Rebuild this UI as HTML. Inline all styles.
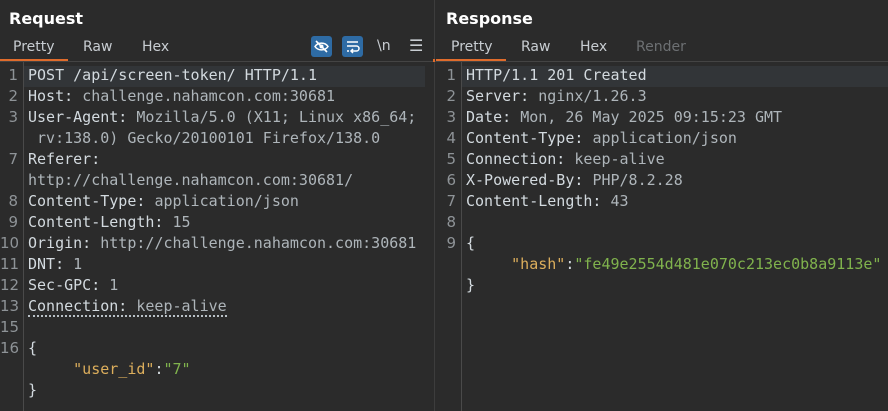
<!DOCTYPE html>
<html><head><style>
body{margin:0;width:888px;height:411px;background:#2b2b2b;overflow:hidden;position:relative;font-family:"Liberation Sans","DejaVu Sans",sans-serif}
.h{position:absolute;top:9px;font-size:16px;font-weight:bold;color:#fff;font-family:"DejaVu Sans",sans-serif}
.tab{position:absolute;top:39px;font-size:14px;color:#c8cdd2;font-family:"DejaVu Sans",sans-serif}
.code{position:absolute;top:65px;font-family:"DejaVu Sans Mono",monospace;font-size:15px;line-height:21px;white-space:pre;color:#d3dadf}
.ln{position:absolute;top:65px;font-family:"DejaVu Sans",sans-serif;font-size:15px;line-height:21px;white-space:pre;color:#8e9397;text-align:right}
.v{color:#aeb5ba}.k{color:#dcae5c}.s{color:#80b34d}
</style></head><body>
<div style="position:absolute;left:434px;top:0;width:1px;height:411px;background:#3d3d3d"></div>
<div class="h" style="left:9px">Request</div>
<div class="h" style="left:446px">Response</div>
<div class="tab" style="left:13px">Pretty</div><div class="tab" style="left:83px">Raw</div><div class="tab" style="left:142px">Hex</div>
<div class="tab" style="left:451px">Pretty</div><div class="tab" style="left:521px">Raw</div><div class="tab" style="left:580px">Hex</div><div class="tab" style="left:636px;color:#6d7073">Render</div>
<div style="position:absolute;left:0;top:61px;width:888px;height:1px;background:#444"></div>
<div style="position:absolute;left:0;top:59px;width:68px;height:2px;background:#e06c2c"></div>
<div style="position:absolute;left:436px;top:59px;width:70px;height:2px;background:#e06c2c"></div>
<div style="position:absolute;left:433px;top:59px;width:2px;height:3px;background:#e06c2c"></div>
<div style="position:absolute;left:311px;top:36px;width:21px;height:21px;border-radius:3px;background:#2e6ba4"></div>
<svg style="position:absolute;left:311px;top:36px" width="21" height="21"><path d="M4 10.5C7 6 14 6 17 10.5C14 15 7 15 4 10.5Z" fill="none" stroke="#fff" stroke-width="1.5"/><circle cx="10.5" cy="10.5" r="2" fill="#fff"/><path d="M5 5L16 16" stroke="#fff" stroke-width="1.6"/></svg>
<div style="position:absolute;left:342px;top:36px;width:21px;height:21px;border-radius:3px;background:#2e6ba4"></div>
<svg style="position:absolute;left:342px;top:36px" width="21" height="21"><path d="M5 6H16M5 10H14.5a2.5 2.5 0 0 1 0 5H9M11 13L9 15L11 17M5 15H7" fill="none" stroke="#fff" stroke-width="1.5"/></svg>
<div style="position:absolute;left:377px;top:38px;font-size:14px;color:#c8cdd2;font-family:'DejaVu Sans',sans-serif">\n</div>
<div style="position:absolute;left:409px;top:36px;font-size:16px;color:#c8cdd2;font-family:'DejaVu Sans',sans-serif">☰</div>
<div style="position:absolute;left:23px;top:62px;width:1px;height:349px;background:#4a4a4a"></div>
<div style="position:absolute;left:461px;top:62px;width:1px;height:349px;background:#4a4a4a"></div>
<div style="position:absolute;left:24px;top:66px;width:401px;height:21px;background:#323538"></div>
<div style="position:absolute;left:462px;top:66px;width:426px;height:21px;background:#323538"></div>
<div class="ln" style="left:0;width:18px">1
2
3

7

8
9
10
11
12
13
15
16</div>
<div class="code" style="left:28px">POST /api/screen-token/ HTTP/1.1
Host: <span class="v">challenge.nahamcon.com:30681</span>
User-Agent: <span class="v">Mozilla/5.0 (X11; Linux x86_64;</span>
<span class="v"> rv:138.0) Gecko/20100101 Firefox/138.0</span>
Referer:
<span class="v">http://challenge.nahamcon.com:30681/</span>
Content-Type: <span class="v">application/json</span>
Content-Length: <span class="v">15</span>
Origin: <span class="v">http://challenge.nahamcon.com:30681</span>
DNT: <span class="v">1</span>
Sec-GPC: <span class="v">1</span>
<span style="border-bottom:2px dotted #b8c0c6">Connection: <span class="v">keep-alive</span></span>

{
     <span class="k">"user_id"</span>:<span class="s">"7"</span>
}</div>
<div class="ln" style="left:438px;width:18px">1
2
3
4
5
6
7
8
9</div>
<div class="code" style="left:466px">HTTP/1.1 201 Created
Server: <span class="v">nginx/1.26.3</span>
Date: <span class="v">Mon, 26 May 2025 09:15:23 GMT</span>
Content-Type: <span class="v">application/json</span>
Connection: <span class="v">keep-alive</span>
X-Powered-By: <span class="v">PHP/8.2.28</span>
Content-Length: <span class="v">43</span>

{
     <span class="k">"hash"</span>:<span class="s">"fe49e2554d481e070c213ec0b8a9113e"</span>
}</div>
</body></html>
